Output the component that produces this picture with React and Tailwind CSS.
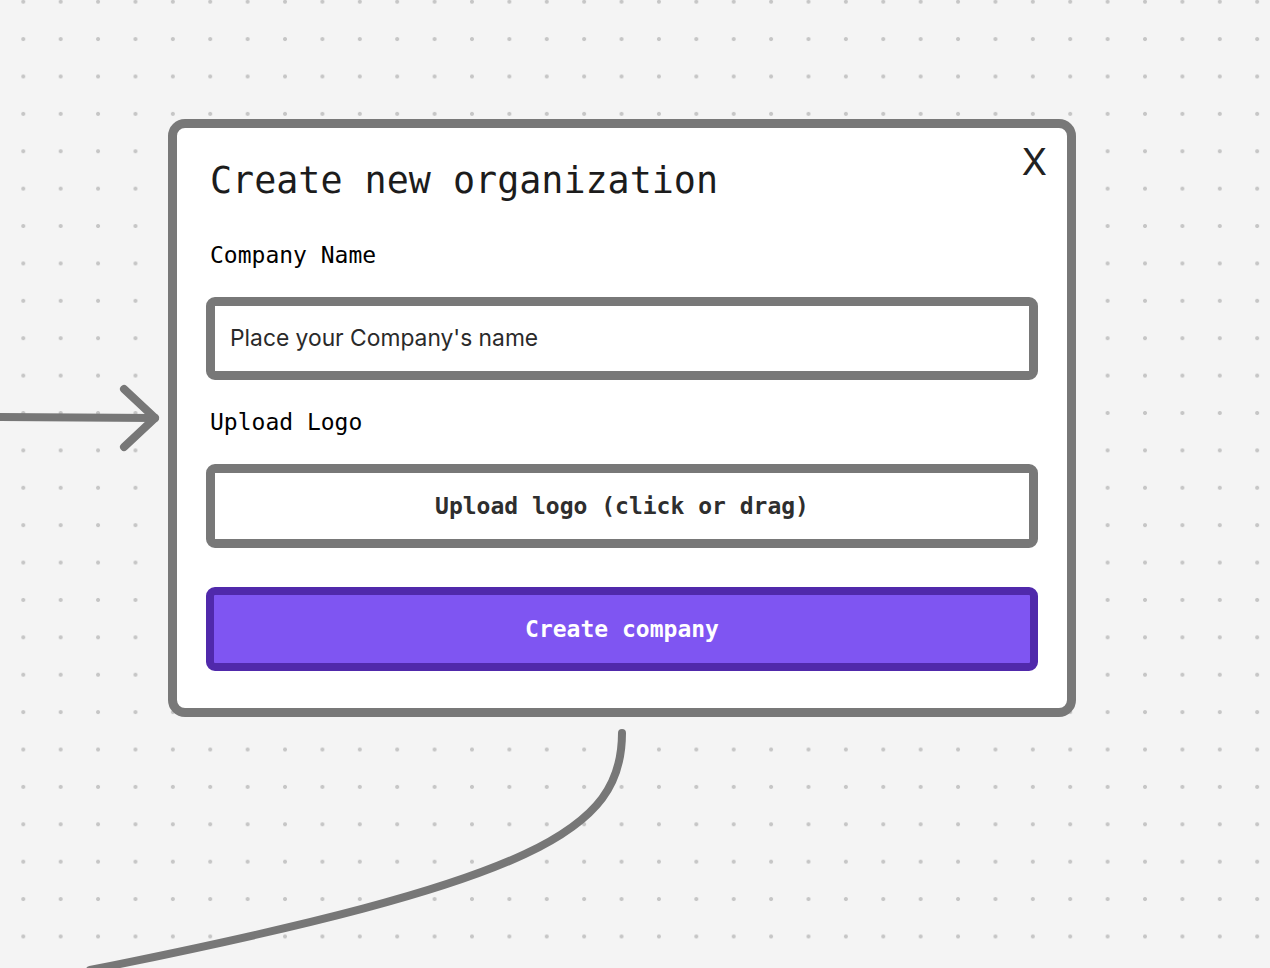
export default function App() {
  const mono = "font-['DejaVu_Sans_Mono','Liberation_Mono',monospace]";
  return (
    <div className="relative w-[1270px] h-[968px] overflow-hidden bg-[#f4f4f4] bg-[radial-gradient(circle,#c6c6c6_1.7px,transparent_2.3px)] bg-[length:37.4px_37.4px] bg-[position:4.6px_-17px] pt-[119px] pl-[168px]">
      <svg className="absolute inset-0 pointer-events-none" width="1270" height="968" viewBox="0 0 1270 968" fill="none">
        <path d="M0 417 L155 418" stroke="#777" strokeWidth="8" strokeLinecap="round" />
        <path d="M124 389 L155 418 L124 447" stroke="#777" strokeWidth="8" strokeLinecap="round" strokeLinejoin="round" />
        <path d="M622 733 C622 830 540 880 90 970" stroke="#777" strokeWidth="8" strokeLinecap="round" />
      </svg>
      <div className="relative w-[908px] h-[598px] rounded-[17px] border-[9px] border-[#787878] bg-white px-[29px] pt-[31px]">
        <div className="absolute right-[20px] top-[15px] text-[37px] leading-none text-[#222] font-['Inter',sans-serif]">X</div>
        <h1 className={`${mono} ml-[4px] text-[36.7px] leading-[44px] text-[#1c1c1c]`}>Create new organization</h1>
        <div className={`${mono} ml-[4px] mt-[37px] text-[23px] leading-[30px] text-black`}>Company Name</div>
        <div className="mt-[27px] h-[83px] rounded-[9px] border-[9px] border-[#787878] bg-white flex items-center px-[15px]">
          <span className="font-['Inter',sans-serif] text-[22.8px] text-[#2a2a2a]">Place your Company's name</span>
        </div>
        <div className={`${mono} ml-[4px] mt-[27px] text-[23px] leading-[30px] text-black`}>Upload Logo</div>
        <div className="mt-[27px] h-[84px] rounded-[9px] border-[9px] border-[#787878] bg-white flex items-center justify-center">
          <span className={`${mono} font-bold text-[23px] text-[#2e2e2e]`}>Upload logo (click or drag)</span>
        </div>
        <div className="mt-[39px] h-[84px] rounded-[9px] border-[8px] border-[#5029ab] bg-[#7f55f2] flex items-center justify-center">
          <span className={`${mono} font-bold text-[23px] text-white`}>Create company</span>
        </div>
      </div>
    </div>
  );
}
